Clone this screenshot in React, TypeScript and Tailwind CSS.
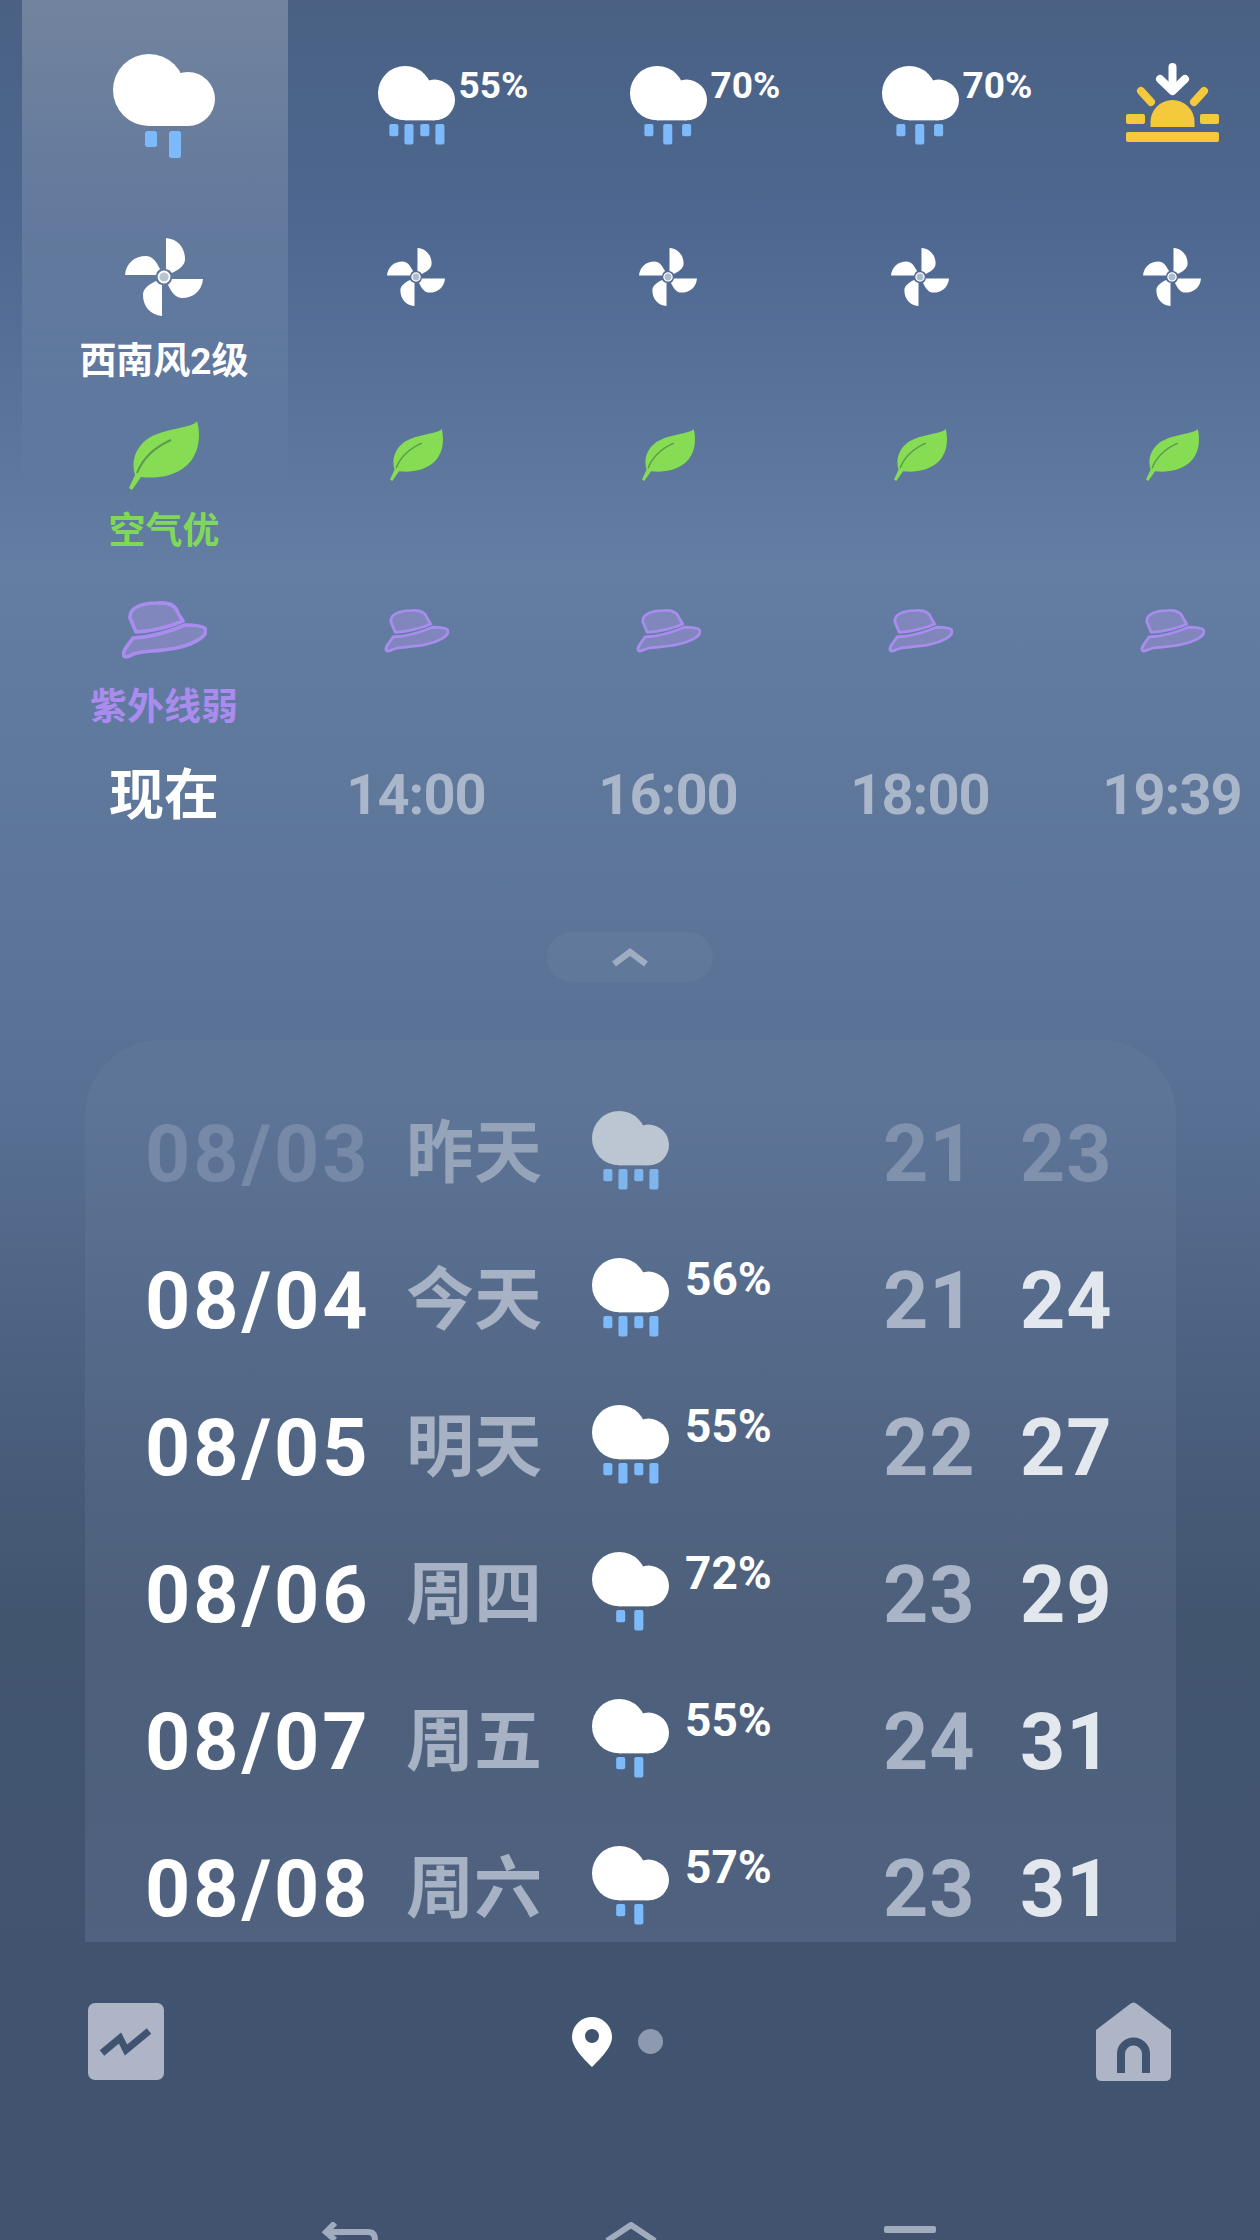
import React from "react";

const FONT = "font-['Roboto','Noto_Sans_CJK_SC',sans-serif]";

function Cloud({ drops, w, muted }: { drops: [number, number][]; w: number; muted?: boolean }) {
  return (
    <svg width={w} height={(w * 106) / 102} viewBox="0 0 102 106" className="block">
      <g fill={muted ? "#bcc6d3" : "#ffffff"}>
        <circle cx="36" cy="36" r="36" />
        <circle cx="75" cy="45" r="27" />
        <rect x="36" y="36" width="39" height="36" />
      </g>
      {drops.map(([x, h], i) => (
        <rect key={i} x={x} y="77" width="12" height={h} rx="2.5" fill={muted ? "#7fb4ec" : "#7cbafc"} />
      ))}
    </svg>
  );
}

const D2: [number, number][] = [[32, 16], [56, 27]];
const D3: [number, number][] = [[19, 16], [44, 27], [69, 16]];
const D4: [number, number][] = [[15, 16], [35, 27], [56, 16], [76, 27]];

function Wind({ s }: { s: number }) {
  const blade = "M41 0 C53 1 60 10 60 21 C60 27 55 31 47 35 A9 9 0 0 0 41 31 Z";
  return (
    <svg width={s} height={s} viewBox="0 0 78 78" className="block">
      {[0, 90, 180, 270].map((r) => (
        <path key={r} d={blade} fill="#fff" transform={`rotate(${r} 39 39)`} />
      ))}
      <circle cx="39" cy="39" r="5.5" fill="#ffffff" fillOpacity="0.55" stroke="#fff" strokeWidth="1.8" />
    </svg>
  );
}

function Leaf({ s }: { s: number }) {
  return (
    <svg width={s} height={s} viewBox="0 0 70 70" className="block">
      <path
        d="M68 1 C66 8 32 8 17 20 C6 29 2 42 6 55 L0 68 L3 70 L12 57 C35 60 57 52 65 36 C71 26 71 10 68 1Z"
        fill="#86dc52"
      />
      <path d="M8 53 C14 38 26 27 42 20" fill="none" stroke="#5c9a50" strokeWidth="2" />
    </svg>
  );
}

function Hat({ w }: { w: number }) {
  return (
    <svg width={w} height={(w * 58) / 86} viewBox="0 0 86 58" className="block">
      <g stroke="#a98dee" strokeWidth="3.6" strokeLinejoin="round" fill="#8d8bc8" fillOpacity="0.7">
        <path d="M15 31 L9 17 C8 7 20 2 36 2 C48 1 55 5 57 12 L62 20 C48 26 30 30 15 31Z" />
        <path d="M3 55 C1 50 6 46 12 37 C30 36 50 30 64 24 C74 24 84 25 85 29 C85 37 70 44 55 47 C42 50 25 50 16 52 C10 53 6 58 3 55Z" />
      </g>
    </svg>
  );
}

function Sun() {
  return (
    <svg width="93" height="79" viewBox="0 0 93 79" className="block">
      <g fill="#f5c93c">
        <path d="M24.5 64 V59 A22 22 0 0 1 68.5 59 V64Z" />
        <rect x="0" y="51" width="19" height="10" rx="2" />
        <rect x="74" y="51" width="19" height="10" rx="2" />
        <rect x="0" y="69" width="93" height="10" rx="2" />
      </g>
      <g stroke="#f5c93c" strokeWidth="8" strokeLinecap="round">
        <line x1="15" y1="28" x2="25" y2="39" />
        <line x1="78" y1="28" x2="68" y2="39" />
      </g>
      <g stroke="#fff" strokeWidth="8" strokeLinecap="round" strokeLinejoin="round" fill="none">
        <line x1="46.5" y1="4" x2="46.5" y2="26" />
        <polyline points="34,16 46.5,28 59,16" />
      </g>
    </svg>
  );
}

const hours = [
  { pct: "55%", drops: D4, time: "14:00" },
  { pct: "70%", drops: D3, time: "16:00" },
  { pct: "70%", drops: D3, time: "18:00" },
  { pct: "", drops: D3, time: "19:39" },
];

const rows = [
  { d: "08/03", n: "昨天", drops: D4, pct: "", lo: "21", hi: "23", past: true },
  { d: "08/04", n: "今天", drops: D4, pct: "56%", lo: "21", hi: "24" },
  { d: "08/05", n: "明天", drops: D4, pct: "55%", lo: "22", hi: "27" },
  { d: "08/06", n: "周四", drops: D2, pct: "72%", lo: "23", hi: "29" },
  { d: "08/07", n: "周五", drops: D2, pct: "55%", lo: "24", hi: "31" },
  { d: "08/08", n: "周六", drops: D2, pct: "57%", lo: "23", hi: "31" },
];

export default function App() {
  return (
    <div
      className={`${FONT} w-[1260px] h-[2240px] overflow-hidden bg-[linear-gradient(180deg,#4a6183_0px,#4d6790_220px,#637da3_570px,#5c7598_900px,#587094_1100px,#4a5f7e_1400px,#42556f_1620px,#41536f_2240px)]`}
    >
      {/* hourly */}
      <div className="pl-[22px] grid grid-cols-[266px_repeat(4,252px)] h-[830px]">
        <div className="pl-[18px] flex flex-col items-center bg-linear-to-b from-white/22 to-transparent to-60%">
          <div className="h-[238px] pt-[54px]">
            <Cloud drops={D2} w={102} />
          </div>
          <div className="h-[182px] flex flex-col items-center">
            <Wind s={78} />
            <span className="mt-[24px] text-[37px] leading-[44px] font-bold text-white whitespace-nowrap">西南风2级</span>
          </div>
          <div className="h-[181px] flex flex-col items-center">
            <Leaf s={70} />
            <span className="mt-[20px] text-[37px] leading-[44px] font-bold text-[#7fd85a]">空气优</span>
          </div>
          <div className="h-[159px] flex flex-col items-center">
            <Hat w={86} />
            <span className="mt-[27px] text-[37px] leading-[44px] font-bold text-[#a98ced]">紫外线弱</span>
          </div>
          <span className="h-[70px] text-[55px] leading-[70px] font-bold text-white">现在</span>
        </div>
        {hours.map((h) => (
          <div key={h.time} className="pl-[4px] flex flex-col items-center">
            <div className="h-[248px] pt-[66px] relative">
              {h.pct ? (
                <>
                  <Cloud drops={h.drops} w={77} />
                  <span className="absolute left-[81px] top-[64px] text-[37px] leading-[44px] font-bold text-white">
                    {h.pct}
                  </span>
                </>
              ) : (
                <div className="-mt-[3px]">
                  <Sun />
                </div>
              )}
            </div>
            <div className="h-[180px]">
              <Wind s={58} />
            </div>
            <div className="h-[181px]">
              <Leaf s={53} />
            </div>
            <div className="h-[151px]">
              <Hat w={65} />
            </div>
            <span className="h-[70px] text-[56px] leading-[70px] font-bold tracking-[-1px] text-[#aab6ca] whitespace-nowrap">
              {h.time}
            </span>
          </div>
        ))}
      </div>

      {/* expander */}
      <div className="mt-[102px] mx-auto w-[166px] h-[50px] rounded-[25px] bg-white/4 flex items-center justify-center">
        <svg width="38" height="20" viewBox="0 0 38 20">
          <polyline points="3,17 19,5 35,17" fill="none" stroke="#9fadc3" strokeWidth="6.5" />
        </svg>
      </div>

      {/* daily */}
      <div className="mt-[58px] ml-[85px] w-[1091px] h-[902px] rounded-t-[76px] overflow-hidden pt-[40px] bg-linear-to-b from-white/3 to-[#c0d0ff]/11">
        {rows.map((r) => (
          <div key={r.d} className="h-[147px] flex items-center">
            <span
              className={`ml-[60px] w-[261px] text-[79px] leading-[80px] font-bold tracking-[3px] whitespace-nowrap ${r.past ? "text-[#7689a6]" : "text-white"}`}
            >
              {r.d}
            </span>
            <span className={`w-[186px] text-[68px] leading-[80px] font-bold ${r.past ? "text-[#95a4b9]" : "text-[#a7b2c4]"}`}>
              {r.n}
            </span>
            <div className="w-[291px] relative pb-[5px]">
              <Cloud drops={r.drops} w={77} muted={r.past} />
              {r.pct && (
                <span className="absolute left-[93px] -top-[4px] text-[46px] leading-[50px] font-bold text-white">
                  {r.pct}
                </span>
              )}
            </div>
            <span className={`w-[137px] text-[79px] leading-[80px] font-bold tracking-[1px] ${r.past ? "text-[#7f91ad]" : "text-[#a9b4c6]"}`}>
              {r.lo}
            </span>
            <span className={`text-[79px] leading-[80px] font-bold tracking-[1px] ${r.past ? "text-[#7f91ad]" : "text-[#e3e7ee]"}`}>
              {r.hi}
            </span>
          </div>
        ))}
      </div>

      {/* bottom bar */}
      <div className="mt-[60px] pl-[88px] pr-[89px] h-[79px] flex items-center">
        <svg width="76" height="77" viewBox="0 0 76 77" className="block">
          <rect width="76" height="77" rx="7" fill="#adb5c6" />
          <polyline points="14,50 32,35 38,47 61,28" fill="none" stroke="#40536f" strokeWidth="7" strokeLinejoin="miter" />
        </svg>
        <svg width="40" height="50" viewBox="0 0 40 50" className="block ml-[408px]">
          <path d="M20 0 C31 0 40 9 40 20 C40 31 27 43 20 50 C13 43 0 31 0 20 C0 9 9 0 20 0Z" fill="#fff" />
          <circle cx="20" cy="19" r="7" fill="#40536f" />
        </svg>
        <div className="ml-[26px] w-[25px] h-[25px] rounded-full bg-[#8c99ae]" />
        <svg width="75" height="79" viewBox="0 0 75 79" className="block ml-auto">
          <path
            d="M34 2 Q37.5 -1 41 2 L75 28 V73 Q75 79 69 79 H6 Q0 79 0 73 V28 Z"
            fill="#adb5c6"
          />
          <path d="M25 71 V52 A12.5 12.5 0 0 1 50 52 V71" fill="none" stroke="#40536f" strokeWidth="8" />
        </svg>
      </div>

      {/* nav */}
      <div className="mt-[141px] flex">
        <svg width="57" height="18" viewBox="0 0 57 18" className="block ml-[321px]">
          <path d="M5 10 H47 Q54 10 54 18 M14 1 L5 10 L14 18" fill="none" stroke="#a0abbe" strokeWidth="6" />
        </svg>
        <svg width="54" height="18" viewBox="0 0 54 18" className="block ml-[226px]">
          <path d="M3 19 L27 3 L51 19" fill="none" stroke="#a0abbe" strokeWidth="6" />
        </svg>
        <div className="ml-[226px] mt-[4px] w-[52px] h-[7px] rounded-[2px] bg-[#a0abbe]" />
      </div>
    </div>
  );
}
